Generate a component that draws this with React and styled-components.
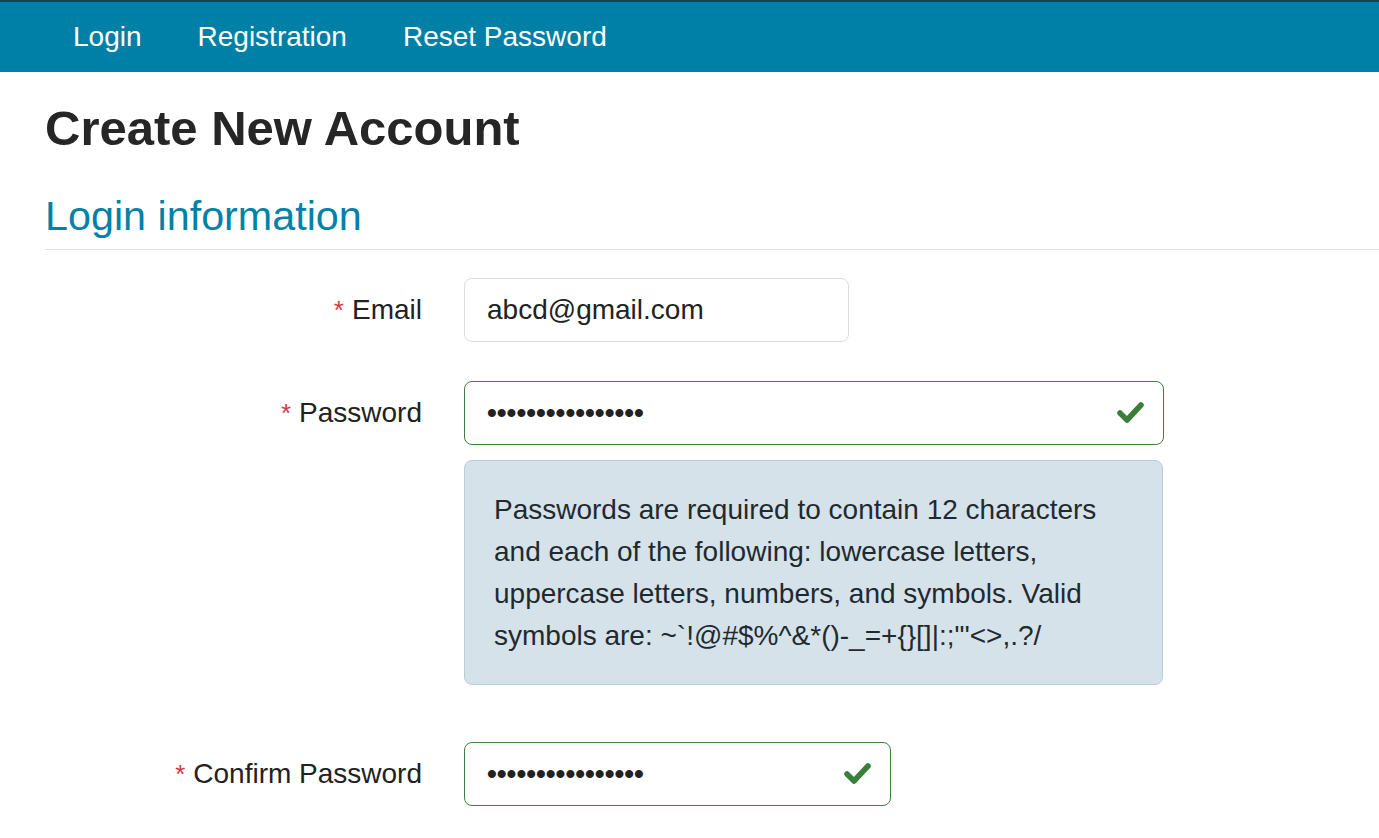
import React from 'react';
import styled, { createGlobalStyle } from 'styled-components';

const GlobalStyle = createGlobalStyle`
  html, body {
    margin: 0;
    padding: 0;
    background: #fff;
    font-family: "Liberation Sans", Arial, sans-serif;
    color: #222;
  }
`;

const NavBar = styled.nav`
  background: #0080a7;
  border-top: 2px solid #23395b;
  height: 70px;
  display: flex;
  align-items: center;
  padding-left: 73px;
  gap: 56px;
`;

const NavLink = styled.a`
  color: #fff;
  font-size: 28px;
  text-decoration: none;
`;

const Page = styled.main`
  padding: 0 0 0 45px;
`;

const Title = styled.h1`
  font-size: 49px;
  font-weight: 700;
  color: #262626;
  margin: 28px 0 0;
  line-height: 56px;
`;

const SectionTitle = styled.h2`
  font-size: 41.3px;
  font-weight: 400;
  color: #0082a8;
  margin: 36px 0 0;
  line-height: 48px;
  padding-bottom: 9px;
  border-bottom: 1px solid #e2e2e2;
`;

const Form = styled.div`
  display: flex;
  flex-direction: column;
  padding-top: 28px;
`;

const Row = styled.div`
  display: grid;
  grid-template-columns: 377px auto;
  column-gap: 42px;
  margin-bottom: ${p => p.gap || 0}px;
`;

const Label = styled.label`
  text-align: right;
  font-size: 28px;
  line-height: 64px;
  color: #222;
`;

const Star = styled.span`
  color: #d9343f;
  margin-right: 8px;
  font-size: 26px;
`;

const Field = styled.div`
  display: flex;
  flex-direction: column;
  gap: 15px;
`;

const InputBox = styled.div`
  width: ${p => p.width}px;
  height: 64px;
  box-sizing: border-box;
  border: 1px solid ${p => (p.valid ? '#3f7e3f' : '#dcdcdc')};
  border-radius: 8px;
  display: flex;
  align-items: center;
  justify-content: space-between;
  padding: 0 17px 0 22px;
  font-size: 28px;
  color: #222;
`;

const Dots = styled.span`
  font-size: 28px;
  font-weight: 700;
`;

const HelpBox = styled.div`
  width: 699px;
  box-sizing: border-box;
  background: #d6e2e9;
  border: 1px solid #b9ccd8;
  border-radius: 8px;
  padding: 28px 30px 27px 29px;
  font-size: 28px;
  line-height: 42px;
  color: #1f2a30;
`;

const Check = () => (
  <svg width="30" height="26" viewBox="0 0 30 26">
    <polyline
      points="4,13 11,20 25,5"
      fill="none"
      stroke="#3b7d3b"
      strokeWidth="5.5"
      strokeLinecap="round"
      strokeLinejoin="round"
    />
  </svg>
);

const helpText =
  'Passwords are required to contain 12 characters and each of the following: ' +
  'lowercase letters, uppercase letters, numbers, and symbols. ' +
  'Valid symbols are: ~`!@#$%^&*()-_=+{}[]|:;"\'<>,.?/';

export default function App() {
  return (
    <>
      <GlobalStyle />
      <NavBar>
        <NavLink href="#">Login</NavLink>
        <NavLink href="#">Registration</NavLink>
        <NavLink href="#">Reset Password</NavLink>
      </NavBar>
      <Page>
        <Title>Create New Account</Title>
        <SectionTitle>Login information</SectionTitle>
        <Form>
          <Row gap={39}>
            <Label><Star>*</Star>Email</Label>
            <Field>
              <InputBox width={385}>abcd@gmail.com</InputBox>
            </Field>
          </Row>
          <Row gap={57}>
            <Label><Star>*</Star>Password</Label>
            <Field>
              <InputBox width={700} valid>
                <Dots>••••••••••••••••</Dots>
                <Check />
              </InputBox>
              <HelpBox>{helpText}</HelpBox>
            </Field>
          </Row>
          <Row>
            <Label><Star>*</Star>Confirm Password</Label>
            <Field>
              <InputBox width={427} valid>
                <Dots>••••••••••••••••</Dots>
                <Check />
              </InputBox>
            </Field>
          </Row>
        </Form>
      </Page>
    </>
  );
}
